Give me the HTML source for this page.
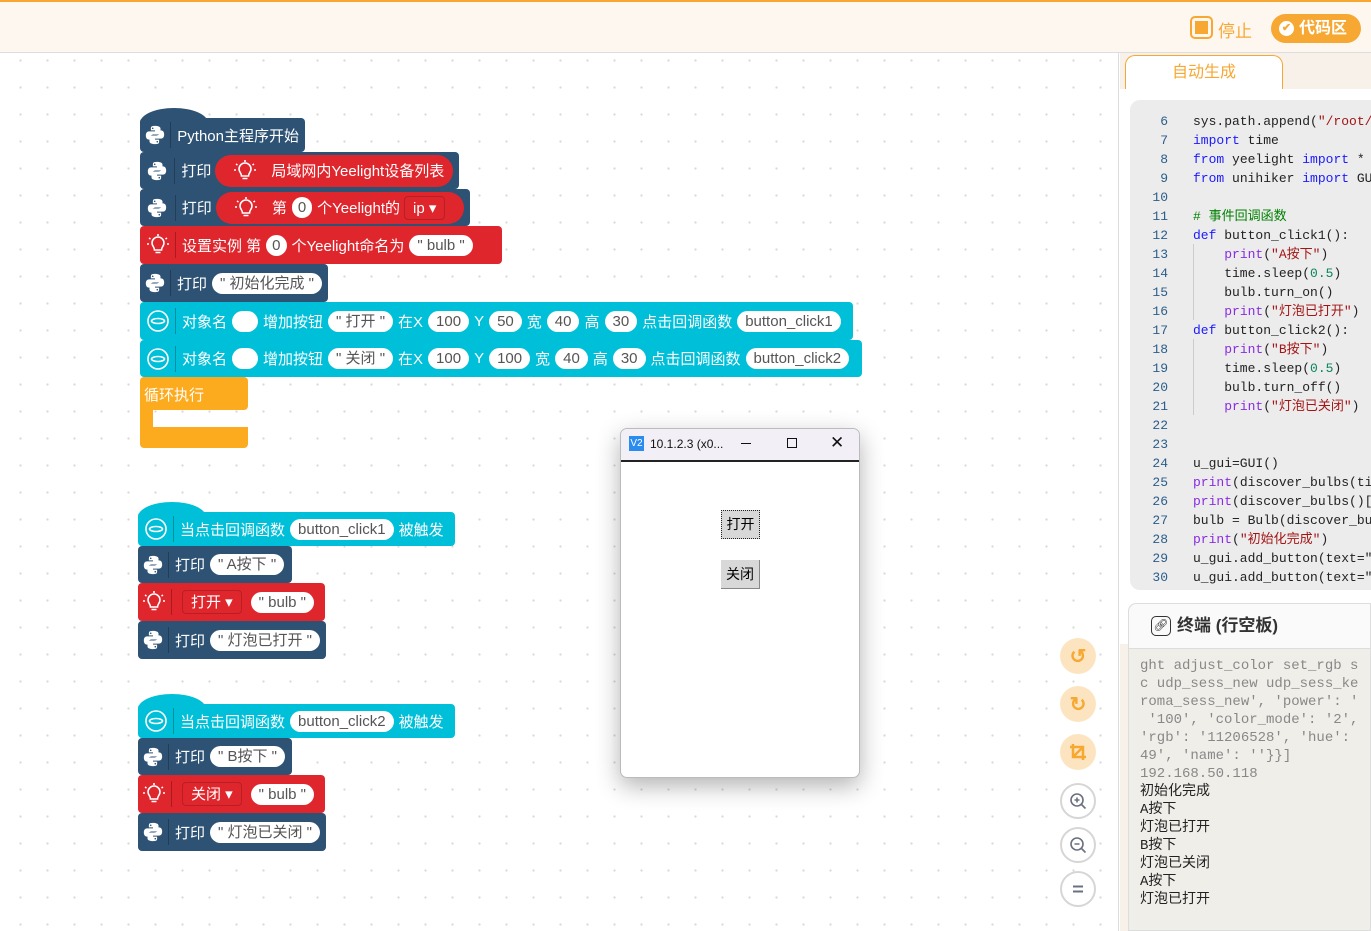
<!DOCTYPE html>
<html><head><meta charset="utf-8"><style>
*{margin:0;padding:0;box-sizing:border-box}
body{width:1371px;height:931px;overflow:hidden;position:relative;background:#fff;font-family:"Liberation Sans","Noto Sans CJK SC",sans-serif}
.top{position:absolute;left:0;top:0;width:1371px;height:53px;background:#fef7f0;border-top:2px solid #f6a832;border-bottom:1px solid #ddd}
.ws{position:absolute;left:0;top:53px;width:1119px;height:878px;background-color:#fff;background-image:radial-gradient(circle,#d8d8d8 1px,transparent 1.3px);background-size:27px 27px;background-position:7px -6px;border-right:1px solid #ddd}
.rp{position:absolute;left:1120px;top:53px;width:251px;height:878px;background:#f7f1ea}
.b{position:absolute;display:flex;align-items:center;color:#fff;font-size:15px;white-space:nowrap;border-radius:4px;padding:0 6px 0 4px}
.dk{background:#2d5274}.rd{background:#e0262d}.cy{background:#00bfd8}.or{background:#fdab1e}
.ic{height:26px;display:flex;align-items:center;justify-content:center;margin-right:6px;border-right:1px solid rgba(0,0,0,.25);padding-right:4px;width:32px}
.p{background:#fff;color:#555;border-radius:11px;height:21px;line-height:21px;padding:0 8px;margin:0 5px;font-size:15px}
.rp2{background:#e0262d;border-radius:16px;height:32px;display:flex;align-items:center;padding:0 8px 0 6px;margin-left:4px}
.dd{border:1px solid #b81e24;border-radius:4px;padding:0 8px;height:24px;line-height:24px;margin:0 4px}
.hat{position:absolute;border-radius:50% 50% 0 0}
.code{position:absolute;left:1130px;top:100px;width:241px;height:490px;background:#ececec;border-radius:10px 0 0 10px;font-family:"Liberation Mono","Noto Sans CJK SC",monospace;font-size:13px}
.ln,.cl{height:19px;line-height:19px;overflow:hidden}
.ln{position:absolute;left:0;width:38px;text-align:right;color:#2a5d8a}
.cl{position:absolute;left:63px;color:#222;white-space:pre}
.kw{color:#1a1aff}.pr{color:#8a2be2}.st{color:#a31515}.cm{color:#008000}.nm{color:#098658}
.term{position:absolute;left:1128px;top:603px;width:243px;height:328px;background:#f0eee9;border:1px solid #ddd;border-radius:8px 0 0 0;overflow:hidden}
.tl{height:18px;line-height:18px}
.fb{position:absolute;left:1060px;width:36px;height:36px;border-radius:50%;display:flex;align-items:center;justify-content:center}
.fo{background:#fde4c0}.fg{border:2px solid #d6d6d6;background:#fff}
</style></head><body>
<div class="top">
 <div style="position:absolute;left:1190px;top:14px;width:23px;height:23px;border:2px solid #f6a832;border-radius:5px;"><div style="position:absolute;left:3px;top:3px;width:13px;height:13px;background:#f6a832"></div></div>
 <div style="position:absolute;left:1218px;top:15px;color:#f6a832;font-size:17px">停止</div>
 <div style="position:absolute;left:1271px;top:12px;width:90px;height:29px;background:#f6a832;border-radius:15px;color:#fff;font-size:16px;font-weight:bold;line-height:29px;padding-left:28px">代码区<div style="position:absolute;left:8px;top:7px;width:15px;height:15px;border-radius:50%;background:#fff;color:#f6a832;font-size:11px;line-height:15px;text-align:center">✔</div></div>
</div>
<div class="ws"></div>
<div class="rp">
 <div style="position:absolute;left:5px;top:2px;width:158px;height:35px;background:#fff;border:1px solid #f6a832;border-bottom:none;border-radius:10px 10px 0 0;color:#f6a832;font-size:16px;text-align:center;line-height:33px">自动生成</div>
 <div style="position:absolute;left:0;top:36px;width:251px;height:555px;background:#fff"></div>
</div>
<div class="code">
<div class="ln" style="top:12px">6</div><div class="cl" style="top:12px">sys.path.append(<span class="st">"/root/mi</span></div>
<div class="ln" style="top:31px">7</div><div class="cl" style="top:31px"><span class="kw">import</span> time</div>
<div class="ln" style="top:50px">8</div><div class="cl" style="top:50px"><span class="kw">from</span> yeelight <span class="kw">import</span> *</div>
<div class="ln" style="top:69px">9</div><div class="cl" style="top:69px"><span class="kw">from</span> unihiker <span class="kw">import</span> GUI</div>
<div class="ln" style="top:88px">10</div>
<div class="ln" style="top:107px">11</div><div class="cl cm" style="top:107px"># 事件回调函数</div>
<div class="ln" style="top:126px">12</div><div class="cl" style="top:126px"><span class="kw">def</span> button_click1():</div>
<div class="ln" style="top:145px">13</div><div class="cl" style="top:145px">    <span class="pr">print</span>(<span class="st">"A按下"</span>)</div>
<div class="ln" style="top:164px">14</div><div class="cl" style="top:164px">    time.sleep(<span class="nm">0.5</span>)</div>
<div class="ln" style="top:183px">15</div><div class="cl" style="top:183px">    bulb.turn_on()</div>
<div class="ln" style="top:202px">16</div><div class="cl" style="top:202px">    <span class="pr">print</span>(<span class="st">"灯泡已打开"</span>)</div>
<div class="ln" style="top:221px">17</div><div class="cl" style="top:221px"><span class="kw">def</span> button_click2():</div>
<div class="ln" style="top:240px">18</div><div class="cl" style="top:240px">    <span class="pr">print</span>(<span class="st">"B按下"</span>)</div>
<div class="ln" style="top:259px">19</div><div class="cl" style="top:259px">    time.sleep(<span class="nm">0.5</span>)</div>
<div class="ln" style="top:278px">20</div><div class="cl" style="top:278px">    bulb.turn_off()</div>
<div class="ln" style="top:297px">21</div><div class="cl" style="top:297px">    <span class="pr">print</span>(<span class="st">"灯泡已关闭"</span>)</div>
<div class="ln" style="top:316px">22</div>
<div class="ln" style="top:335px">23</div>
<div class="ln" style="top:354px">24</div><div class="cl" style="top:354px">u_gui=GUI()</div>
<div class="ln" style="top:373px">25</div><div class="cl" style="top:373px"><span class="pr">print</span>(discover_bulbs(tim</div>
<div class="ln" style="top:392px">26</div><div class="cl" style="top:392px"><span class="pr">print</span>(discover_bulbs()[0</div>
<div class="ln" style="top:411px">27</div><div class="cl" style="top:411px">bulb = Bulb(discover_bul</div>
<div class="ln" style="top:430px">28</div><div class="cl" style="top:430px"><span class="pr">print</span>(<span class="st">"初始化完成"</span>)</div>
<div class="ln" style="top:449px">29</div><div class="cl" style="top:449px">u_gui.add_button(text="打</div>
<div class="ln" style="top:468px">30</div><div class="cl" style="top:468px">u_gui.add_button(text="关</div>
<div style="position:absolute;left:63px;top:144px;width:1px;height:76px;background:#ccc"></div>
<div style="position:absolute;left:63px;top:239px;width:1px;height:76px;background:#ccc"></div>
</div>
<div class="term">
 <div style="height:45px;background:#fafafa;border-bottom:1px solid #ddd;border-radius:8px 0 0 0;font-size:17px;font-weight:bold;color:#333;line-height:44px;padding-left:48px;position:relative">终端 (行空板)<div style="position:absolute;left:22px;top:12px;width:20px;height:20px;border:1.5px solid #333;border-radius:5px;font-size:12px;line-height:17px;text-align:center;font-weight:normal">🔗︎</div></div>
 <div style="padding:8px 0 0 11px;font-family:'Liberation Mono','Noto Sans CJK SC',monospace;font-size:14px;color:#888;white-space:pre"><div class="tl">ght adjust_color set_rgb s</div><div class="tl">c udp_sess_new udp_sess_ke</div><div class="tl">roma_sess_new', 'power': '</div><div class="tl"> '100', 'color_mode': '2',</div><div class="tl">'rgb': '11206528', 'hue':</div><div class="tl">49', 'name': ''}}]</div><div class="tl">192.168.50.118</div><div class="tl" style="color:#222">初始化完成</div><div class="tl" style="color:#222">A按下</div><div class="tl" style="color:#222">灯泡已打开</div><div class="tl" style="color:#222">B按下</div><div class="tl" style="color:#222">灯泡已关闭</div><div class="tl" style="color:#222">A按下</div><div class="tl" style="color:#222">灯泡已打开</div><div class="tl"></div><div class="tl" style="color:#222">_</div></div>
</div>

<svg width="0" height="0" style="position:absolute"><defs>
<symbol id="py" viewBox="0 0 24 24"><path fill="#fff" d="M11.5 2c-4 0-4 1.7-4 3v2h4.5v1H5.5C3.5 8 2 9.5 2 12.5S3.5 17 5.5 17H7v-2.3C7 12.8 8.5 11.5 10.5 11.5h4.5c1.7 0 3-1.3 3-3V5c0-1.6-1.4-3-6.5-3zM9.5 3.8a.9.9 0 110 1.8.9.9 0 010-1.8z"/><path fill="#fff" d="M12.5 22c4 0 4-1.7 4-3v-2H12v-1h6.5c2 0 3.5-1.5 3.5-4.5S20.5 7 18.5 7H17v2.3c0 1.9-1.5 3.2-3.5 3.2H9c-1.7 0-3 1.3-3 3V19c0 1.6 1.4 3 6.5 3zm2-1.8a.9.9 0 110-1.8.9.9 0 010 1.8z"/></symbol>
<symbol id="bl" viewBox="0 0 24 24"><g fill="none" stroke="#fff" stroke-width="1.6"><path d="M8.5 17c0-3-2.5-4-2.5-7a6 6 0 0112 0c0 3-2.5 4-2.5 7z"/><path d="M9.5 19.5h5M12 1v2M3 5l1.5 1M21 5l-1.5 1M1 11h2M21 11h2"/></g></symbol>
<symbol id="ci" viewBox="0 0 24 24"><g fill="none" stroke="#fff" stroke-width="1.6"><circle cx="12" cy="12" r="10"/><ellipse cx="12" cy="12" rx="6.5" ry="2.5"/></g></symbol>
</defs></svg>

<!-- group 1 -->
<div class="hat dk" style="left:140px;top:108px;width:68px;height:30px"></div>
<div class="b dk" style="left:140px;top:118px;width:165px;height:34px"><span class="ic"><svg width="22" height="22"><use href="#py"/></svg></span>Python主程序开始</div>
<div class="b dk" style="left:140px;top:152px;width:319px;height:37px"><span class="ic"><svg width="22" height="22"><use href="#py"/></svg></span>打印<span class="rp2" style="width:243px"><svg width="24" height="24" style="margin:0 14px 0 12px"><use href="#bl"/></svg>局域网内Yeelight设备列表</span></div>
<div class="b dk" style="left:140px;top:189px;width:330px;height:37px"><span class="ic"><svg width="22" height="22"><use href="#py"/></svg></span>打印<span class="rp2" style="width:250px"><svg width="24" height="24" style="margin:0 14px 0 12px"><use href="#bl"/></svg>第<span class="p" style="padding:0 6px">0</span>个Yeelight的<span class="dd">ip ▾</span></span></div>
<div class="b rd" style="left:140px;top:226px;width:362px;height:38px"><span class="ic"><svg width="24" height="24"><use href="#bl"/></svg></span>设置实例 第<span class="p" style="padding:0 6px">0</span>个Yeelight命名为<span class="p">" bulb "</span></div>
<div class="b dk" style="left:140px;top:264px;width:188px;height:38px"><span class="ic"><svg width="22" height="22"><use href="#py"/></svg></span>打印<span class="p">" 初始化完成 "</span></div>
<div class="b cy" style="left:140px;top:302px;width:713px;height:38px"><span class="ic"><svg width="24" height="24"><use href="#ci"/></svg></span>对象名<span class="p" style="width:26px"></span>增加按钮<span class="p">" 打开 "</span>在X<span class="p">100</span>Y<span class="p">50</span>宽<span class="p">40</span>高<span class="p">30</span>点击回调函数<span class="p">button_click1</span></div>
<div class="b cy" style="left:140px;top:340px;width:722px;height:37px"><span class="ic"><svg width="24" height="24"><use href="#ci"/></svg></span>对象名<span class="p" style="width:26px"></span>增加按钮<span class="p">" 关闭 "</span>在X<span class="p">100</span>Y<span class="p">100</span>宽<span class="p">40</span>高<span class="p">30</span>点击回调函数<span class="p">button_click2</span></div>
<div class="b or" style="left:140px;top:377px;width:108px;height:33px;align-items:flex-start;padding-top:7px">循环执行</div>
<div class="or" style="position:absolute;left:140px;top:405px;width:13px;height:30px"></div>
<div class="or" style="position:absolute;left:140px;top:427px;width:108px;height:21px;border-radius:0 0 4px 4px"></div>

<!-- group 2 -->
<div class="hat cy" style="left:138px;top:502px;width:68px;height:30px"></div>
<div class="b cy" style="left:138px;top:512px;width:317px;height:34px"><span class="ic"><svg width="24" height="24"><use href="#ci"/></svg></span>当点击回调函数<span class="p">button_click1</span>被触发</div>
<div class="b dk" style="left:138px;top:546px;width:154px;height:37px"><span class="ic"><svg width="22" height="22"><use href="#py"/></svg></span>打印<span class="p">" A按下 "</span></div>
<div class="b rd" style="left:138px;top:583px;width:187px;height:38px"><span class="ic"><svg width="24" height="24"><use href="#bl"/></svg></span><span class="dd">打开 ▾</span><span class="p">" bulb "</span></div>
<div class="b dk" style="left:138px;top:621px;width:188px;height:38px"><span class="ic"><svg width="22" height="22"><use href="#py"/></svg></span>打印<span class="p">" 灯泡已打开 "</span></div>

<!-- group 3 -->
<div class="hat cy" style="left:138px;top:694px;width:68px;height:30px"></div>
<div class="b cy" style="left:138px;top:704px;width:317px;height:34px"><span class="ic"><svg width="24" height="24"><use href="#ci"/></svg></span>当点击回调函数<span class="p">button_click2</span>被触发</div>
<div class="b dk" style="left:138px;top:738px;width:154px;height:37px"><span class="ic"><svg width="22" height="22"><use href="#py"/></svg></span>打印<span class="p">" B按下 "</span></div>
<div class="b rd" style="left:138px;top:775px;width:187px;height:38px"><span class="ic"><svg width="24" height="24"><use href="#bl"/></svg></span><span class="dd">关闭 ▾</span><span class="p">" bulb "</span></div>
<div class="b dk" style="left:138px;top:813px;width:188px;height:38px"><span class="ic"><svg width="22" height="22"><use href="#py"/></svg></span>打印<span class="p">" 灯泡已关闭 "</span></div>

<!-- window -->
<div style="position:absolute;left:620px;top:428px;width:240px;height:350px;background:#fff;border:1px solid #bbb;border-radius:7px;box-shadow:0 8px 24px rgba(0,0,0,.3);overflow:hidden">
 <div style="height:33px;background:#f3eff7;border-bottom:2px solid #222;position:relative;font-size:12px;color:#111">
  <div style="position:absolute;left:8px;top:7px;width:15px;height:15px;background:#2b8cf0;color:#fff;font-size:10px;line-height:15px;text-align:center">V2</div>
  <div style="position:absolute;left:29px;top:8px">10.1.2.3 (x0...</div>
  <div style="position:absolute;left:120px;top:14px;width:10px;height:1px;background:#111"></div>
  <div style="position:absolute;left:166px;top:9px;width:10px;height:10px;border:1px solid #111"></div>
  <div style="position:absolute;left:209px;top:4px;font-size:17px">✕</div>
 </div>
 <div style="position:absolute;left:100px;top:81px;width:39px;height:29px;background:#d8d8d8;border:1px dotted #222;font-size:14px;text-align:center;line-height:27px">打开</div>
 <div style="position:absolute;left:100px;top:131px;width:39px;height:29px;background:#d8d8d8;border-right:1px solid #888;border-bottom:1px solid #888;font-size:14px;text-align:center;line-height:28px">关闭</div>
</div>

<!-- float buttons -->
<div class="fb fo" style="top:638px;color:#f6a832;font-size:20px;font-weight:bold">↺</div>
<div class="fb fo" style="top:686px;color:#f6a832;font-size:20px;font-weight:bold">↻</div>
<div class="fb fo" style="top:734px"><svg width="18" height="18" viewBox="0 0 18 18" fill="none" stroke="#f6a832" stroke-width="2.5"><path d="M4 1v13h13M1 4h13v13M5 13l8-8"/></svg></div>
<div class="fb fg" style="top:783px"><svg width="18" height="18" viewBox="0 0 18 18" fill="none" stroke="#6a7080" stroke-width="1.6"><circle cx="8" cy="8" r="6"/><path d="M12.5 12.5l4 4M5.5 8h5M8 5.5v5"/></svg></div>
<div class="fb fg" style="top:827px"><svg width="18" height="18" viewBox="0 0 18 18" fill="none" stroke="#6a7080" stroke-width="1.6"><circle cx="8" cy="8" r="6"/><path d="M12.5 12.5l4 4M5.5 8h5"/></svg></div>
<div class="fb fg" style="top:871px"><svg width="16" height="16" viewBox="0 0 16 16" stroke="#6a7080" stroke-width="2"><path d="M3 5.5h10M3 10.5h10"/></svg></div>
</body></html>
